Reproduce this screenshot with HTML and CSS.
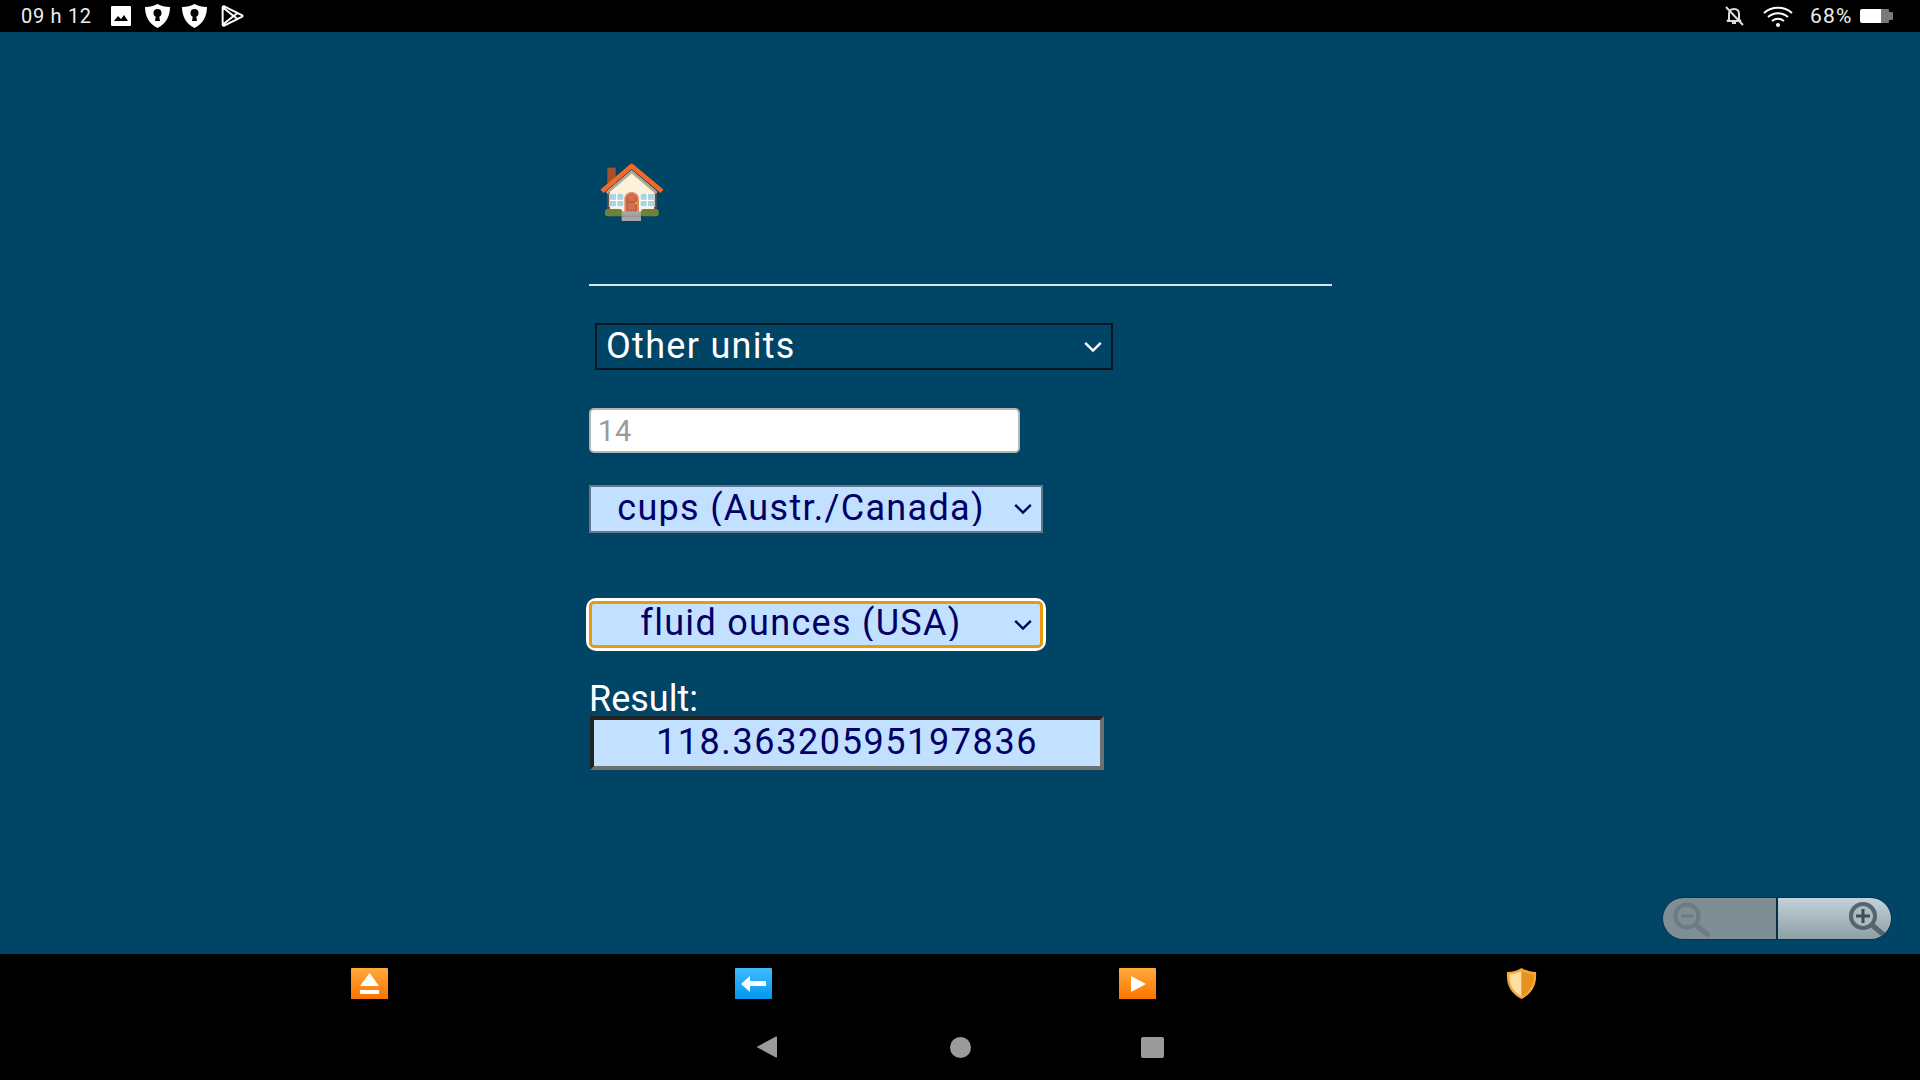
FILE: index.html
```html
<!DOCTYPE html>
<html lang="en">
<head>
<meta charset="utf-8">
<title>Unit converter</title>
<link rel="stylesheet" href="styles.css">
</head>
<body>
<header class="status">
  <div class="status-left">
    <span class="time">09 h 12</span>
    <svg class="st-img" viewBox="0 0 20 20"><path fill="#fff" d="M1 0h18a1 1 0 0 1 1 1v18a1 1 0 0 1-1 1H1a1 1 0 0 1-1-1V1a1 1 0 0 1 1-1z"/><path fill="#000" d="M3 15l4-5 3 3 3-4 4 6z"/></svg>
    <svg class="st-shield" viewBox="0 0 25 24"><path fill="#fff" d="M12.5 0C16 2 20 3 25 3c0 9-4 17-12.500 21C4 20 0 12 0 3c5 0 9-1 12.500-3z"/><circle cx="12.500" cy="9" r="4" fill="#000"/><path fill="#000" d="M11 11h3l1 6h-5z"/></svg>
    <svg class="st-shield" viewBox="0 0 25 24"><path fill="#fff" d="M12.5 0C16 2 20 3 25 3c0 9-4 17-12.500 21C4 20 0 12 0 3c5 0 9-1 12.500-3z"/><circle cx="12.500" cy="9" r="4" fill="#000"/><path fill="#000" d="M11 11h3l1 6h-5z"/></svg>
    <svg class="st-play" viewBox="0 0 21 22"><path fill="none" stroke="#fff" stroke-width="1.800" stroke-linejoin="round" d="M2 2l17 8.500a.6.6 0 0 1 0 1L2 20a1 1 0 0 1-1-1V3a1 1 0 0 1 1-1zM1 3l10 8-10 8M11 11l4-3M11 11l4 3"/></svg>
  </div>
  <div class="status-right">
    <svg class="st-bell" viewBox="0 0 20 20"><path fill="none" stroke="#ddd" stroke-width="2" d="M5 14V8c0-3 2-5 5-5s5 2 5 5v6l2 1H3zM8 17h4M2 1l17 18"/></svg>
    <svg class="st-wifi" viewBox="0 0 30 21"><path fill="none" stroke="#fff" stroke-width="2" d="M1 7c8-7 20-7 28 0M5 11c6-5 14-5 20 0M9 15c4-3 8-3 12 0"/><circle cx="15" cy="19" r="2" fill="#fff"/></svg>
    <span class="pct">68%</span>
    <svg class="st-batt" viewBox="0 0 33 14"><path fill="#fff" d="M2 0h19v14H2a2 2 0 0 1-2-2V2a2 2 0 0 1 2-2z"/><path fill="#7a7a7a" d="M21 0h7a1 1 0 0 1 1 1v2h3a1 1 0 0 1 1 1v6a1 1 0 0 1-1 1h-3v2a1 1 0 0 1-1 1h-7z"/></svg>
  </div>
</header>

<main class="page">
  <svg class="home" viewBox="60 35 195 180">
    <rect x="82" y="52" width="25" height="50" fill="#a8502b"/>
    <path d="M84 120L155 60l72 60v66H84z" fill="#fdf3dc"/>
    <path d="M82 122v64h8v-68zM230 122v64h-8v-68z" fill="#6b5345"/>
    <path d="M80 128L155 64l75 64" fill="none" stroke="#b8a48e" stroke-width="8"/>
    <path d="M66 123L155 47l91 76" fill="none" stroke="#f2692a" stroke-width="14" stroke-linejoin="round"/>
    <path d="M88 128h44v42H88zM180 128h44v42h-44z" fill="#fff"/>
    <path d="M90 130h18v18H90zM112 130h18v18h-18zM90 152h18v16H90zM112 152h18v16h-18zM182 130h18v18h-18zM204 130h18v18h-18zM182 152h18v16h-18zM204 152h18v16h-18z" fill="#a8d3df"/>
    <path d="M133 184v-38c0-28 44-28 44 0v38z" fill="#dc8a6a"/>
    <path d="M139 184v-38c0-20 32-20 32 0v38z" fill="#bc5f3d"/>
    <path d="M144 134h22v18h-22zM144 158h22v20h-22z" fill="#d2714c"/>
    <circle cx="169" cy="158" r="4" fill="#f7a800"/>
    <rect x="75" y="176" width="52" height="22" rx="8" fill="#6f8236"/>
    <rect x="183" y="176" width="53" height="22" rx="8" fill="#6f8236"/>
    <path d="M125 183h58v29h-58z" fill="#a6a6a6"/>
    <path d="M125 196h58v3h-58z" fill="#8a8a8a"/>
  </svg>
  <hr class="rule">
  <div class="sel-wrap sel-cat">
    <select class="sel sel-dark"><option>Other units</option></select>
    <svg class="chev" viewBox="0 0 16 10"><path d="M1.500 1.500L8 8l6.500-6.500" fill="none" stroke="#fff" stroke-width="2"/></svg>
  </div>
  <input class="qty" type="text" placeholder="14">
  <div class="sel-wrap sel-from">
    <select class="sel sel-light"><option>cups (Austr./Canada)</option></select>
    <svg class="chev" viewBox="0 0 16 10"><path d="M1.500 1.500L8 8l6.500-6.500" fill="none" stroke="#000066" stroke-width="2"/></svg>
  </div>
  <div class="sel-wrap sel-to">
    <select class="sel sel-light sel-focus"><option>fluid ounces (USA)</option></select>
    <svg class="chev" viewBox="0 0 16 10"><path d="M1.500 1.500L8 8l6.500-6.500" fill="none" stroke="#000066" stroke-width="2"/></svg>
  </div>
  <label class="res-label">Result:</label>
  <input class="result" type="text" readonly value="118.36320595197836">

  <div class="zoom">
    <div class="zoom-half zoom-out">
      <svg class="mag mag-out" viewBox="0 0 40 36"><circle cx="15" cy="15" r="11.500" fill="none" stroke="#6e7b82" stroke-width="4"/><path d="M9 15h12" stroke="#6e7b82" stroke-width="3"/><path d="M24 24l13 11" stroke="#6e7b82" stroke-width="5"/></svg>
    </div>
    <div class="zoom-half zoom-in">
      <svg class="mag mag-in" viewBox="0 0 40 36"><circle cx="15" cy="15" r="12" fill="#aabbc3" stroke="#55656c" stroke-width="4"/><path d="M8 15h14M15 8v14" stroke="#3f4c52" stroke-width="3"/><path d="M24 24l13 11" stroke="#55656c" stroke-width="5"/></svg>
    </div>
  </div>
</main>

<footer class="bottom">
  <div class="tools">
    <svg class="tool" viewBox="0 0 37 31"><defs><linearGradient id="orange" x1="0" y1="0" x2="0" y2="1"><stop offset="0" stop-color="#ffaa3c"/><stop offset="1" stop-color="#fb7400"/></linearGradient><linearGradient id="blue" x1="0" y1="0" x2="0" y2="1"><stop offset="0" stop-color="#42bbff"/><stop offset="1" stop-color="#0098ee"/></linearGradient></defs><path d="M1 0h35a1 1 0 0 1 1 1v30H0V1a1 1 0 0 1 1-1z" fill="url(#orange)"/><path d="M18.500 5L28 18H9z" fill="#fff"/><rect x="9" y="22" width="19" height="4" fill="#fff"/></svg>
    <svg class="tool" viewBox="0 0 37 31"><path d="M1 0h35a1 1 0 0 1 1 1v30H0V1a1 1 0 0 1 1-1z" fill="url(#blue)"/><path d="M6 16l9-8v5h16v5H15v6z" fill="#fff"/></svg>
    <svg class="tool" viewBox="0 0 37 31"><path d="M1 0h35a1 1 0 0 1 1 1v30H0V1a1 1 0 0 1 1-1z" fill="url(#orange)"/><path d="M12 8l15 8-15 8z" fill="#fff"/></svg>
    <svg class="tool" viewBox="0 0 37 31"><path d="M18.500 0c4 2.500 9 4 14.500 4 1 12-3 21-14.500 27C7 25 3 16 4 4c5.500 0 10.500-1.500 14.500-4z" fill="#f7a537"/><path d="M18.500 3C15 5 11 6 6.500 6.500 6 16 9.500 23.500 18.500 28.500z" fill="#ffdfa3"/><path d="M18.500 3c3.500 2 7.500 3 12 3.500.5 9.500-3 17-12 22z" fill="#e8911c"/></svg>
  </div>
  <nav class="nav">
    <svg class="nav-back" viewBox="0 0 21 22"><path d="M21 1v20a.8.8 0 0 1-1 .5L.5 11 20 .5a.8.8 0 0 1 1 .5z" fill="#9b9b9b"/></svg>
    <span class="nav-home"></span>
    <span class="nav-recent"></span>
  </nav>
</footer>
</body>
</html>
```
FILE: styles.css
```css
* { box-sizing: border-box; }
html, body { margin: 0; height: 100%; }
body {
  width: 1920px;
  height: 1080px;
  overflow: hidden;
  display: flex;
  flex-direction: column;
  background: #004466;
  font-family: Roboto, "Liberation Sans", sans-serif;
}
.status {
  height: 32px;
  flex: none;
  background: #000;
  color: #eee;
  display: flex;
  justify-content: space-between;
  align-items: center;
  padding: 0 27px 0 21px;
  font-size: 20px;
}
.status-left, .status-right { display: flex; align-items: center; }
.time { width: 90px; letter-spacing: .7px; }
.st-img { width: 20px; height: 20px; margin-right: 14px; }
.st-shield { width: 25px; height: 24px; margin-right: 12px; }
.st-play { width: 24px; height: 24px; margin-left: 2px; }
.st-bell { width: 20px; height: 20px; margin-right: 19px; }
.st-wifi { width: 30px; height: 21px; margin-right: 17px; }
.pct { width: 50px; font-size: 21px; letter-spacing: 1.2px; }
.st-batt { width: 33px; height: 14px; }

.page {
  flex: 1;
  position: relative;
  display: flex;
  flex-direction: column;
  align-items: flex-start;
  padding: 130px 0 0 589px;
}
.home { width: 65px; height: 60px; margin-left: 11px; display: block; }
.rule {
  width: 743px;
  height: 2px;
  margin: 62px 0 0;
  border: 0;
  background: #d8e4ea;
}
.sel-wrap { position: relative; }
.sel {
  appearance: none;
  -webkit-appearance: none;
  display: block;
  width: 100%;
  height: 100%;
  border-radius: 0;
  font: 36px Roboto, sans-serif;
  letter-spacing: 1.3px;
  line-height: 1;
  outline: 0;
}
.sel-dark {
  background: #004466;
  color: #fff;
  border: 2px solid #0a1620;
  padding: 0 40px 2px 9px;
}
.sel-light {
  background: #c2e0ff;
  color: #000066;
  border: 2px solid #66788a;
  padding: 0 30px 2px 0;
  text-align: center;
  text-align-last: center;
}
.sel-focus {
  border: 3px solid #e69a0c;
  border-radius: 5px;
  padding-bottom: 3px;
}
.chev { position: absolute; right: 10px; top: 50%; width: 20px; height: 12px; margin-top: -6px; pointer-events: none; }
.sel-cat { width: 518px; height: 47px; margin: 37px 0 0 6px; }
.sel-from { width: 454px; height: 48px; margin-top: 32px; }
.sel-to {
  width: 454px;
  height: 47px;
  margin: 68px 0 0;
  border-radius: 7px;
  box-shadow: 0 0 0 3px #fff;
}
.qty {
  width: 431px;
  height: 45px;
  margin-top: 38px;
  border: 2px solid #b5b5b5;
  border-radius: 5px;
  background: #fff;
  padding: 0 7px;
  font: 29px Roboto, sans-serif;
  letter-spacing: .6px;
  outline: 0;
}
.qty::placeholder { color: #9a9a9a; opacity: 1; }
.res-label { color: #fff; font-size: 36px; line-height: 42px; margin-top: 30px; }
.result {
  width: 514px;
  height: 54px;
  margin: -4px 0 0 1px;
  background: #c2e0ff;
  color: #000066;
  border-style: solid;
  border-width: 4px;
  border-color: #222 #6f6f6f #6f6f6f #222;
  font: 36px Roboto, sans-serif;
  letter-spacing: 1.6px;
  text-align: center;
  outline: 0;
  padding: 0 0 3px;
}
.zoom {
  position: absolute;
  right: 28px;
  bottom: 14px;
  width: 230px;
  height: 43px;
  display: flex;
  border-radius: 22px;
  overflow: hidden;
  border: 1px solid #0d3347;
}
.zoom-half { display: flex; align-items: center; }
.zoom-out {
  width: 115px;
  background: #7f8d94;
  border-right: 2px solid #0b2f42;
  padding-left: 9px;
}
.zoom-in {
  flex: 1;
  background: linear-gradient(#c3d2da, #8f9fa6);
  justify-content: flex-end;
  padding-right: 3px;
}
.mag { width: 40px; height: 36px; }

.bottom { height: 126px; flex: none; background: #000; display: flex; flex-direction: column; }
.tools {
  display: grid;
  grid-template-columns: repeat(4, 384px);
  padding: 14px 0 0 177px;
  justify-items: center;
}
.tool { width: 37px; height: 31px; display: block; }
.nav {
  display: flex;
  align-items: center;
  justify-content: center;
  margin-top: 37px;
  height: 22px;
}
.nav-back { width: 21px; height: 22px; margin-right: 172px; }
.nav-home { width: 21px; height: 21px; border-radius: 50%; background: #9b9b9b; margin-left: 1px; }
.nav-recent { width: 23px; height: 21px; border-radius: 2px; background: #9b9b9b; margin-left: 170px; }
```
